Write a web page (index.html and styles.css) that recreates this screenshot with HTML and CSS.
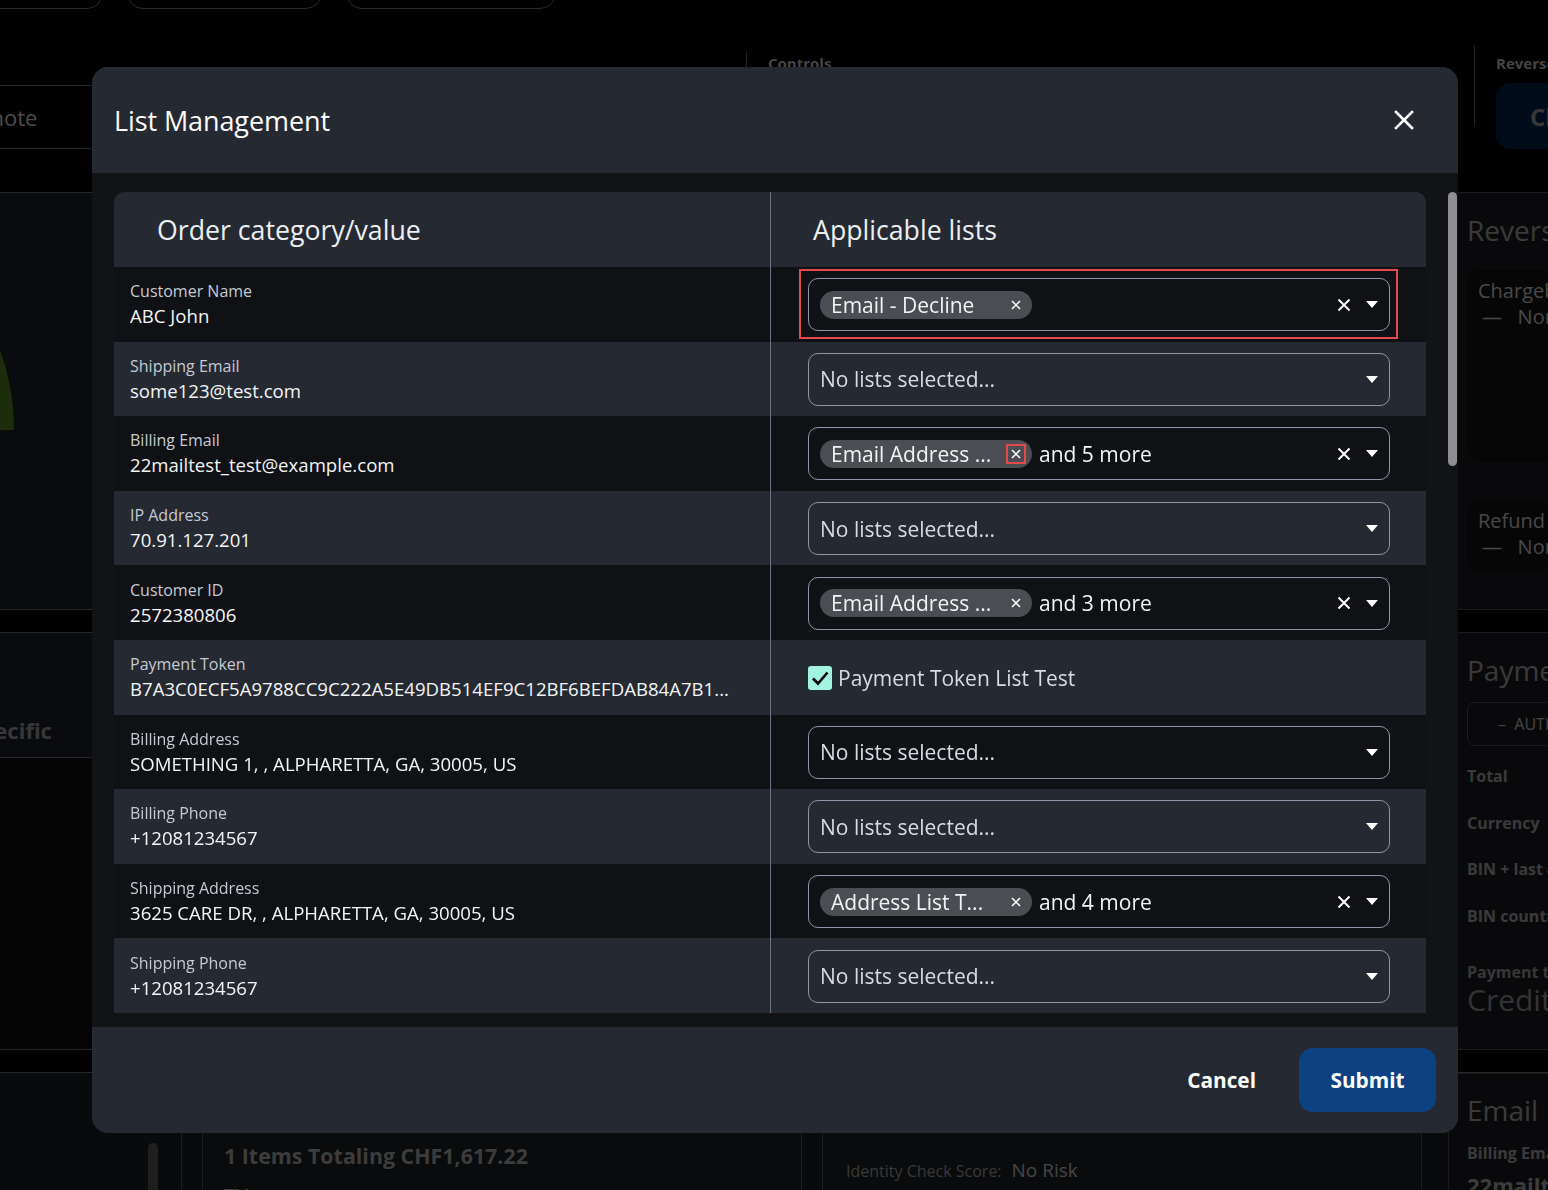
FILE: index.html
```html
<!DOCTYPE html>
<html lang="en">
<head>
<meta charset="utf-8">
<title>Order Review</title>
<link rel="stylesheet" href="styles.css">
</head>
<body>
<div class="page">
  <nav class="tabs">
    <span class="tab tab-a"></span>
    <span class="tab tab-b"></span>
    <span class="tab tab-c"></span>
  </nav>

  <header class="toolbar">
    <div class="note-box">Add a note</div>
    <section class="controls">
      <span class="tool-label">Controls</span>
    </section>
    <section class="reverse">
      <span class="vrule"></span>
      <div class="reverse-body">
        <span class="tool-label">Reverse</span>
        <button class="dash-btn">Chargeback</button>
      </div>
    </section>
  </header>

  <main class="dash">
    <section class="panel panel-chart">
      <svg class="gauge" viewBox="0 0 480 237" width="480" height="237">
        <path d="M4 237 A236 236 0 0 1 476 237 L410 237 A170 170 0 0 0 70 237 Z" fill="#3c6419"/>
      </svg>
    </section>
    <section class="side-card reversals">
      <h3 class="side-title">Reversals</h3>
      <div class="sub-card tall">
        <div class="sub-label">Chargeback</div>
        <div class="sub-value">&mdash;&nbsp;&nbsp; None</div>
      </div>
      <div class="sub-card">
        <div class="sub-label">Refund Status</div>
        <div class="sub-value">&mdash;&nbsp;&nbsp; None</div>
      </div>
    </section>

    <section class="panel panel-specific">
      <div class="specific-head"><h3 class="specific-title">Merchant specific</h3></div>
    </section>
    <section class="side-card payment">
      <h3 class="side-title">Payment</h3>
      <div class="status-box">&ndash;&nbsp; AUTHORIZED</div>
      <dl class="facts">
        <dt>Total</dt>
        <dt>Currency</dt>
        <dt>BIN + last 4</dt>
        <dt>BIN country</dt>
      </dl>
      <div class="pay-type-label">Payment type</div>
      <div class="pay-type">Credit</div>
    </section>

    <section class="dash-bottom">
      <div class="rail"><span class="rail-thumb"></span></div>
      <div class="bottom-card items">
        <h3 class="items-title">1 Items Totaling CHF1,617.22</h3>
        <div class="items-line">TV</div>
      </div>
      <div class="bottom-card identity">
        <span class="id-label">Identity Check Score:</span>
        <span class="id-value">No Risk</span>
      </div>
      <div class="side-card email">
        <h3 class="side-title">Email Insights</h3>
        <div class="email-label">Billing Email</div>
        <div class="email-value">22mailtest_test@example.com</div>
      </div>
    </section>
  </main>
</div>

<div class="backdrop"></div>

<div class="dialog" role="dialog" aria-labelledby="dlg-title">
  <header class="dialog-head">
    <h2 class="dialog-title" id="dlg-title">List Management</h2>
    <button class="close" aria-label="Close">
      <svg viewBox="0 0 20 20" width="20" height="20"><path d="M2 2 L18 18 M18 2 L2 18" stroke="#fff" stroke-width="2.6" stroke-linecap="square"/></svg>
    </button>
  </header>

  <div class="dialog-body">
    <div class="lists">
      <div class="lists-head">
        <div class="head-cell head-field">Order category/value</div>
        <div class="head-cell">Applicable lists</div>
      </div>

      <div class="row dark">
        <div class="cell-field"><div class="field-label">Customer Name</div><div class="field-value">ABC John</div></div>
        <div class="cell-lists">
          <div class="select flagged">
            <div class="select-values">
              <span class="chip"><span class="chip-text">Email - Decline</span><span class="chip-x"><svg viewBox="0 0 10 10" width="10" height="10"><path d="M1 1 L9 9 M9 1 L1 9" stroke="#fff" stroke-width="1.5"/></svg></span></span>
            </div>
            <span class="select-clear"><svg viewBox="0 0 14 14" width="14" height="14"><path d="M1.5 1.5 L12.5 12.5 M12.5 1.5 L1.5 12.5" stroke="#fff" stroke-width="2"/></svg></span>
            <span class="select-caret"><svg viewBox="0 0 12 7" width="12" height="7"><path d="M0 0 H12 L6 7 Z" fill="#fff"/></svg></span>
          </div>
        </div>
      </div>

      <div class="row light">
        <div class="cell-field"><div class="field-label">Shipping Email</div><div class="field-value">some123@test.com</div></div>
        <div class="cell-lists">
          <div class="select">
            <div class="select-values"><span class="placeholder">No lists selected...</span></div>
            <span class="select-caret"><svg viewBox="0 0 12 7" width="12" height="7"><path d="M0 0 H12 L6 7 Z" fill="#fff"/></svg></span>
          </div>
        </div>
      </div>

      <div class="row dark">
        <div class="cell-field"><div class="field-label">Billing Email</div><div class="field-value">22mailtest_test@example.com</div></div>
        <div class="cell-lists">
          <div class="select">
            <div class="select-values">
              <span class="chip"><span class="chip-text">Email Address ...</span><span class="chip-x flagged"><svg viewBox="0 0 10 10" width="10" height="10"><path d="M1 1 L9 9 M9 1 L1 9" stroke="#fff" stroke-width="1.5"/></svg></span></span>
              <span class="more">and 5 more</span>
            </div>
            <span class="select-clear"><svg viewBox="0 0 14 14" width="14" height="14"><path d="M1.5 1.5 L12.5 12.5 M12.5 1.5 L1.5 12.5" stroke="#fff" stroke-width="2"/></svg></span>
            <span class="select-caret"><svg viewBox="0 0 12 7" width="12" height="7"><path d="M0 0 H12 L6 7 Z" fill="#fff"/></svg></span>
          </div>
        </div>
      </div>

      <div class="row light">
        <div class="cell-field"><div class="field-label">IP Address</div><div class="field-value">70.91.127.201</div></div>
        <div class="cell-lists">
          <div class="select">
            <div class="select-values"><span class="placeholder">No lists selected...</span></div>
            <span class="select-caret"><svg viewBox="0 0 12 7" width="12" height="7"><path d="M0 0 H12 L6 7 Z" fill="#fff"/></svg></span>
          </div>
        </div>
      </div>

      <div class="row dark">
        <div class="cell-field"><div class="field-label">Customer ID</div><div class="field-value">2572380806</div></div>
        <div class="cell-lists">
          <div class="select">
            <div class="select-values">
              <span class="chip"><span class="chip-text">Email Address ...</span><span class="chip-x"><svg viewBox="0 0 10 10" width="10" height="10"><path d="M1 1 L9 9 M9 1 L1 9" stroke="#fff" stroke-width="1.5"/></svg></span></span>
              <span class="more">and 3 more</span>
            </div>
            <span class="select-clear"><svg viewBox="0 0 14 14" width="14" height="14"><path d="M1.5 1.5 L12.5 12.5 M12.5 1.5 L1.5 12.5" stroke="#fff" stroke-width="2"/></svg></span>
            <span class="select-caret"><svg viewBox="0 0 12 7" width="12" height="7"><path d="M0 0 H12 L6 7 Z" fill="#fff"/></svg></span>
          </div>
        </div>
      </div>

      <div class="row light">
        <div class="cell-field"><div class="field-label">Payment Token</div><div class="field-value">B7A3C0ECF5A9788CC9C222A5E49DB514EF9C12BF6BEFDAB84A7B1...</div></div>
        <div class="cell-lists">
          <label class="checkline">
            <span class="checkbox"><svg viewBox="0 0 24 24" width="24" height="24"><path d="M5 12.5 L10 17.5 L19.5 6.5" fill="none" stroke="#000" stroke-width="2.6"/></svg></span>
            <span>Payment Token List Test</span>
          </label>
        </div>
      </div>

      <div class="row dark">
        <div class="cell-field"><div class="field-label">Billing Address</div><div class="field-value">SOMETHING 1, , ALPHARETTA, GA, 30005, US</div></div>
        <div class="cell-lists">
          <div class="select">
            <div class="select-values"><span class="placeholder">No lists selected...</span></div>
            <span class="select-caret"><svg viewBox="0 0 12 7" width="12" height="7"><path d="M0 0 H12 L6 7 Z" fill="#fff"/></svg></span>
          </div>
        </div>
      </div>

      <div class="row light">
        <div class="cell-field"><div class="field-label">Billing Phone</div><div class="field-value">+12081234567</div></div>
        <div class="cell-lists">
          <div class="select">
            <div class="select-values"><span class="placeholder">No lists selected...</span></div>
            <span class="select-caret"><svg viewBox="0 0 12 7" width="12" height="7"><path d="M0 0 H12 L6 7 Z" fill="#fff"/></svg></span>
          </div>
        </div>
      </div>

      <div class="row dark">
        <div class="cell-field"><div class="field-label">Shipping Address</div><div class="field-value">3625 CARE DR, , ALPHARETTA, GA, 30005, US</div></div>
        <div class="cell-lists">
          <div class="select">
            <div class="select-values">
              <span class="chip"><span class="chip-text">Address List T...</span><span class="chip-x"><svg viewBox="0 0 10 10" width="10" height="10"><path d="M1 1 L9 9 M9 1 L1 9" stroke="#fff" stroke-width="1.5"/></svg></span></span>
              <span class="more">and 4 more</span>
            </div>
            <span class="select-clear"><svg viewBox="0 0 14 14" width="14" height="14"><path d="M1.5 1.5 L12.5 12.5 M12.5 1.5 L1.5 12.5" stroke="#fff" stroke-width="2"/></svg></span>
            <span class="select-caret"><svg viewBox="0 0 12 7" width="12" height="7"><path d="M0 0 H12 L6 7 Z" fill="#fff"/></svg></span>
          </div>
        </div>
      </div>

      <div class="row light">
        <div class="cell-field"><div class="field-label">Shipping Phone</div><div class="field-value">+12081234567</div></div>
        <div class="cell-lists">
          <div class="select">
            <div class="select-values"><span class="placeholder">No lists selected...</span></div>
            <span class="select-caret"><svg viewBox="0 0 12 7" width="12" height="7"><path d="M0 0 H12 L6 7 Z" fill="#fff"/></svg></span>
          </div>
        </div>
      </div>
    </div>

    <div class="scrollbar"><div class="thumb"></div></div>
  </div>

  <footer class="dialog-foot">
    <button class="btn-text">Cancel</button>
    <button class="btn-primary">Submit</button>
  </footer>
</div>
</body>
</html>
```

FILE: styles.css
```css
* { box-sizing: border-box; margin: 0; padding: 0; }

html, body { height: 100%; }

body {
  background: #000;
  color: #fff;
  font-family: "Open Sans", "Noto Sans", "Liberation Sans", sans-serif;
  overflow: hidden;
}

button {
  font: inherit;
  color: inherit;
  background: none;
  border: 0;
  cursor: pointer;
}

h2, h3 { font-weight: 400; }

/* ---------- dashboard behind the dialog ---------- */

.page {
  width: 1548px;
  height: 1190px;
  overflow: hidden;
}

.tabs {
  display: flex;
  gap: 24px;
  height: 41px;
  margin: -32px 0 0 -40px;
}

.tab {
  height: 41px;
  border: 1px solid #5d5d5d;
  border-radius: 16px;
}
.tab-a { width: 143px; }
.tab-b { width: 195px; }
.tab-c { width: 210px; }

.toolbar {
  display: grid;
  grid-template-columns: 746px 728px 1fr;
  height: 183px;
}

.note-box {
  margin: 76px 0 0 -94px;
  width: 400px;
  height: 64px;
  border-top: 1px solid #545454;
  border-bottom: 1px solid #545454;
  display: flex;
  align-items: center;
  padding-left: 20px;
  font-size: 22px;
  color: #a8a8a8;
}

.controls {
  margin-top: 43px;
  height: 130px;
  border-left: 1px solid #545454;
  padding-left: 21px;
}

.tool-label {
  display: block;
  font-size: 15px;
  line-height: 22px;
  font-weight: 700;
  color: #9a9a9a;
}

.reverse {
  display: flex;
  margin-top: 36px;
}

.vrule {
  width: 1px;
  height: 80px;
  background: #545454;
}

.reverse-body {
  padding: 7px 0 0 21px;
}

.dash-btn {
  margin-top: 9px;
  height: 66px;
  padding: 0 34px;
  border-radius: 14px;
  background: #041b3a;
  color: #7d7d7d;
  font-size: 24px;
  font-weight: 700;
  white-space: nowrap;
}

.dash {
  display: grid;
  grid-template-columns: 182px 600px 606px 1fr;
  grid-template-rows: 418px 418px 200px;
  column-gap: 20px;
  row-gap: 22px;
}

.panel {
  grid-column: 1 / 4;
  border-top: 1px solid #545454;
  border-bottom: 1px solid #545454;
  background: #181a1f;
}

.gauge {
  display: block;
  margin: 0 0 0 -462px;
}

.panel-specific { background: #0c0c0c; }

.specific-head {
  height: 125px;
  background: #181a1f;
  border-bottom: 1px solid #545454;
  display: flex;
  align-items: flex-end;
  padding-bottom: 12px;
}

.specific-title {
  margin-left: -143px;
  font-size: 22px;
  line-height: 30px;
  font-weight: 700;
  color: #7a7a7a;
  white-space: nowrap;
}

.side-card {
  border: 1px solid #3e3e42;
  border-radius: 12px;
  background: #16161a;
  padding: 17px 18px;
  width: 420px;
  white-space: nowrap;
}

.side-title {
  font-size: 28px;
  line-height: 40px;
  color: #818181;
}

.sub-card {
  margin-top: 20px;
  border-radius: 12px;
  background: #0f0f10;
  padding: 8px 11px;
  height: 72px;
}
.sub-card.tall { height: 192px; }
.sub-card + .sub-card { margin-top: 38px; }

.sub-label,
.sub-value {
  font-size: 20px;
  line-height: 26px;
  color: #a0a0a0;
}
.sub-value { padding-left: 4px; }

.status-box {
  margin-top: 12px;
  height: 44px;
  border: 1px solid #3e3e42;
  border-radius: 8px;
  padding-left: 30px;
  display: flex;
  align-items: center;
  font-size: 16px;
  color: #9a9a9a;
}

.facts {
  margin-top: 18px;
}

.facts dt {
  font-size: 16px;
  line-height: 24px;
  font-weight: 700;
  color: #828282;
  margin-bottom: 22.7px;
}

.pay-type-label {
  margin-top: 34px;
  font-size: 16px;
  line-height: 20px;
  font-weight: 700;
  color: #7a7a7a;
}

.pay-type {
  font-size: 30px;
  line-height: 36px;
  color: #727272;
}

.dash-bottom {
  grid-column: 1 / -1;
  display: grid;
  grid-template-columns: 182px 600px 606px 1fr;
  column-gap: 20px;
  border-top: 1px solid #545454;
  background: #16181c;
  align-items: start;
}

.rail {
  height: 200px;
  border-right: 1px solid #3e3e42;
  padding: 70px 0 0 148px;
}

.rail-thumb {
  display: block;
  width: 10px;
  height: 120px;
  border-radius: 5px;
  background: #464646;
}

.bottom-card {
  margin-top: 20px;
  height: 200px;
  border: 1px solid #3e3e42;
  border-radius: 12px;
  background: #17191d;
}

.items { padding: 44px 21px 0; }

.items-title {
  font-size: 21.4px;
  line-height: 36px;
  font-weight: 700;
  color: #868686;
}

.items-line {
  margin-top: 8px;
  font-size: 20px;
  font-weight: 700;
  color: #868686;
}

.identity {
  width: 600px;
  padding: 63px 23px 0;
  display: flex;
  align-items: baseline;
  gap: 10px;
}

.id-label { font-size: 16px; color: #7e7e7e; }
.id-value { font-size: 19px; color: #9c9c9c; }

.email { padding-top: 16px; }

.email-label {
  margin-top: 12px;
  font-size: 16px;
  font-weight: 700;
  color: #828282;
}

.email-value {
  margin-top: 6px;
  font-size: 22px;
  font-weight: 700;
  color: #868686;
}

.backdrop {
  position: fixed;
  inset: 0;
  background: rgba(0, 0, 0, 0.55);
}

/* ---------- list management dialog ---------- */

.dialog {
  position: fixed;
  left: 92px;
  top: 67px;
  width: 1366px;
  height: 1066px;
  border-radius: 16px;
  overflow: hidden;
  display: flex;
  flex-direction: column;
  background: #111317;
}

.dialog-head {
  flex: none;
  height: 106px;
  background: #252932;
  display: flex;
  align-items: center;
  justify-content: space-between;
  padding: 0 44px 0 22px;
}

.dialog-title {
  font-size: 27px;
  color: #fff;
  letter-spacing: -0.1px;
}

.close {
  display: flex;
  width: 20px;
  height: 20px;
}

.dialog-body {
  flex: 1;
  display: flex;
  gap: 22px;
  padding: 19px 1px 0 22px;
  overflow: hidden;
}

.lists {
  flex: none;
  width: 1312px;
}

.lists-head {
  display: grid;
  grid-template-columns: 657px 655px;
  height: 75px;
  background: #252932;
  border-radius: 10px 10px 0 0;
}

.head-cell {
  display: flex;
  align-items: center;
  padding-left: 42px;
  font-size: 26.7px;
  color: #eceef2;
}

.head-field {
  padding-left: 43px;
  border-right: 1px solid #6c7384;
}

.row {
  display: grid;
  grid-template-columns: 657px 655px;
  height: 74.6px;
}
.row.dark { background: #0f1115; }
.row.light { background: #252932; }

.cell-field {
  border-right: 1px solid #6c7384;
  padding-left: 16px;
  display: flex;
  flex-direction: column;
  justify-content: center;
  white-space: nowrap;
}

.field-label {
  font-size: 16px;
  line-height: 24px;
  color: #c6cad2;
}

.field-value {
  font-size: 18.6px;
  line-height: 26px;
  color: #f4f5f7;
}

.cell-lists {
  display: flex;
  align-items: center;
  padding: 1px 36px 0 37px;
}

.select {
  position: relative;
  flex: 1;
  height: 53px;
  border: 1px solid #8d96a8;
  border-radius: 10px;
  display: flex;
  align-items: center;
  padding: 0 11px;
}

.select-values {
  flex: 1;
  display: flex;
  align-items: center;
  gap: 7px;
  min-width: 0;
}

.placeholder {
  font-size: 21px;
  color: #d8dbe2;
}

.chip {
  width: 212px;
  height: 28px;
  border-radius: 14px;
  background: #4b4d53;
  display: flex;
  align-items: center;
  padding: 0 6px 0 11px;
}

.chip-text {
  flex: 1;
  font-size: 21px;
  line-height: 28px;
  color: #f2f3f5;
  white-space: nowrap;
  overflow: hidden;
}

.chip-x {
  position: relative;
  flex: none;
  width: 20px;
  height: 20px;
  display: flex;
  align-items: center;
  justify-content: center;
}

.more {
  font-size: 21px;
  color: #f4f5f7;
  white-space: nowrap;
}

.select-clear {
  display: flex;
  margin-right: 15px;
}

.select-caret {
  display: flex;
}

/* red review markers */
.flagged::after {
  content: "";
  position: absolute;
  inset: -10px -9px -9px -10px;
  border: 2px solid #e5484d;
  pointer-events: none;
}

.chip-x.flagged::after { inset: 0; }

.checkline {
  display: flex;
  align-items: center;
  gap: 6px;
  font-size: 21px;
  color: #d8dbe2;
}

.checkbox {
  display: flex;
  width: 24px;
  height: 24px;
  border-radius: 3px;
  background: #a2f3df;
}

.scrollbar {
  flex: none;
  width: 9px;
}

.thumb {
  height: 274px;
  border-radius: 5px;
  background: #8f8f8f;
}

.dialog-foot {
  flex: none;
  height: 106px;
  background: #252932;
  display: flex;
  align-items: center;
  justify-content: flex-end;
  gap: 23px;
  padding-right: 22px;
}

.btn-text {
  padding: 0 20px;
  font-size: 20.8px;
  font-weight: 700;
  color: #fff;
}

.btn-primary {
  width: 137px;
  height: 64px;
  border-radius: 14px;
  background: #0c4282;
  font-size: 20.8px;
  font-weight: 700;
  color: #fff;
}
```
